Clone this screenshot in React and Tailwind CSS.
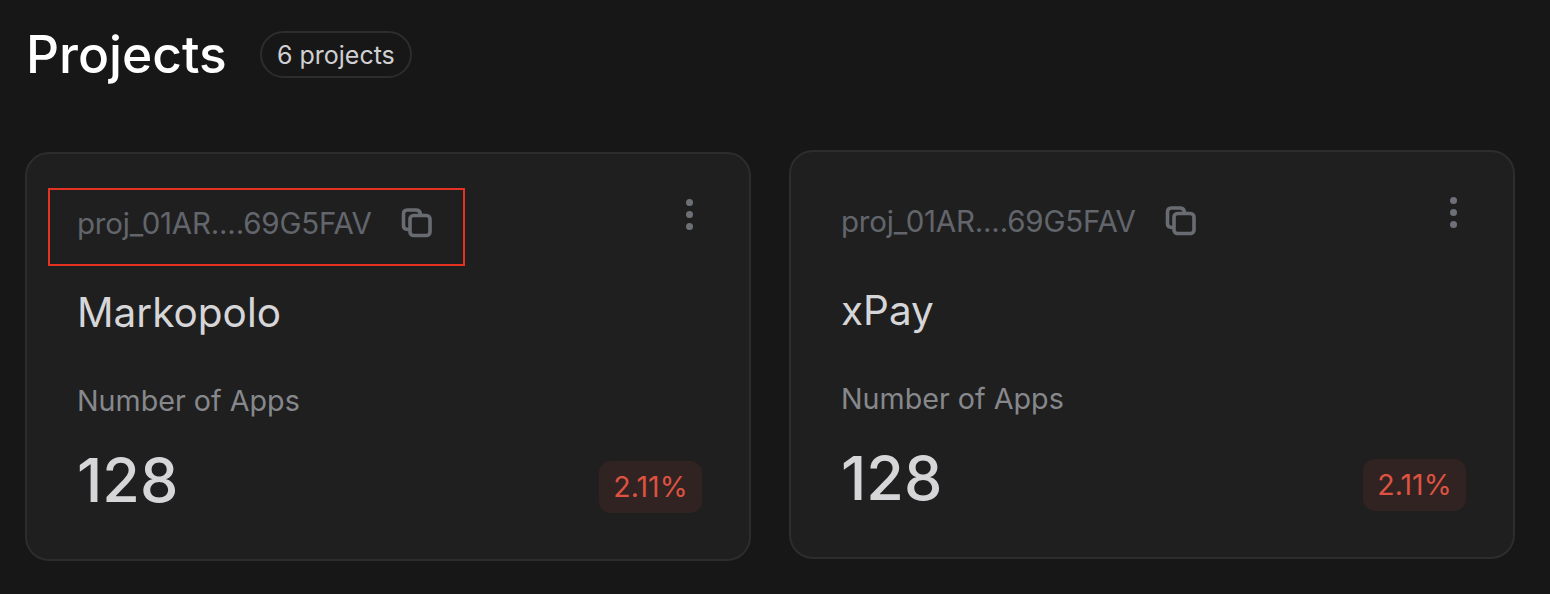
import React from 'react';

const font = "font-['Inter','Liberation_Sans',sans-serif]";

function CopyIcon() {
  return (
    <svg width="32" height="32" viewBox="0 0 32 32" fill="none" stroke="#686c72" strokeWidth="3.6" strokeLinejoin="round">
      <path d="M8 22.5C4.5 22.5 3.5 21 3.5 19V7C3.5 4.5 4.8 3 7.2 3H16C18.5 3 20 4.2 20.5 7" strokeLinecap="round" />
      <rect x="10" y="8.5" width="20" height="20" rx="3.5" />
    </svg>
  );
}

function Dots() {
  return (
    <div className="flex flex-col gap-[5px]">
      <span className="w-[7px] h-[7px] rounded-full bg-[#6d7177]" />
      <span className="w-[7px] h-[7px] rounded-full bg-[#6d7177]" />
      <span className="w-[7px] h-[7px] rounded-full bg-[#6d7177]" />
    </div>
  );
}

function ProjectCard({ name, highlighted, className }) {
  return (
    <div className={`relative w-[726px] h-[409px] rounded-[24px] border-2 border-[#2d2d2d] bg-[#1f1f1f] pl-[50px] pr-[47px] ${className}`}>
      {highlighted && (
        <div className="absolute left-[21px] top-[34px] w-[417px] h-[78px] border-2 border-[#e63223]" />
      )}
      <div className="flex items-start justify-between pt-[45px]">
        <div className="flex items-center gap-[28px] h-[48px]">
          <span className="text-[29.5px] tracking-[-0.2px] text-[#62666c]">proj_01AR....69G5FAV</span>
          <CopyIcon />
        </div>
        <div className="mr-[9px]">
          <Dots />
        </div>
      </div>
      <div className="mt-[42px] text-[40.5px] leading-[48px] text-[#d6d6d8]">{name}</div>
      <div className="mt-[46px] text-[28.7px] leading-[36px] text-[#86888c]">Number of Apps</div>
      <div className="mt-[25px] flex items-center justify-between">
        <span className="text-[61px] leading-[72px] font-medium text-[#d6d6d8]">128</span>
        <span className="mt-[14px] flex items-center justify-center w-[103px] h-[52px] rounded-[12px] bg-[#312322] text-[28.5px] text-[#dd5241]">2.11%</span>
      </div>
    </div>
  );
}

export default function App() {
  return (
    <div className={`w-[1550px] h-[594px] overflow-hidden bg-[#171717] ${font}`}>
      <div className="flex items-center pl-[26px] pt-[26px] gap-[33px]">
        <h1 className="text-[51.5px] leading-[56px] font-medium text-white">Projects</h1>
        <span className="flex items-center justify-center w-[152px] h-[47px] pt-[3px] rounded-full border-2 border-[#2d2d2d] text-[25px] text-[#d0d0d2]">6 projects</span>
      </div>
      <div className="flex items-start gap-[38px] pl-[25px] mt-[68px]">
        <ProjectCard name="Markopolo" highlighted className="mt-[2px]" />
        <ProjectCard name="xPay" />
      </div>
    </div>
  );
}
